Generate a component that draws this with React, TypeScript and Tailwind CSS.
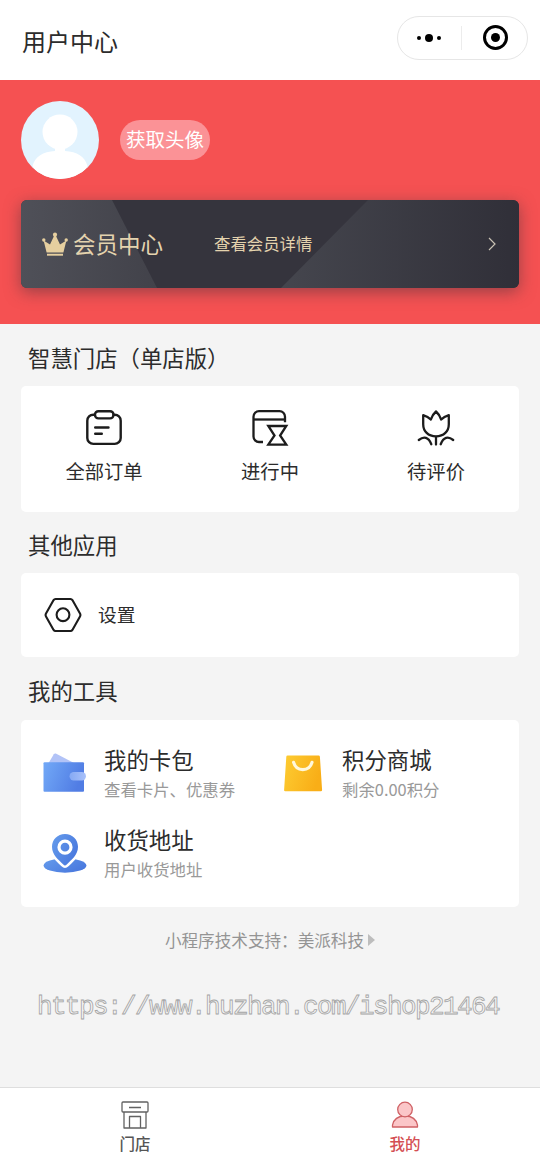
import React from 'react';

interface SectionProps {
  title: string;
  titleClass: string;
  children: React.ReactNode;
}

interface ToolItemProps {
  icon: React.ReactNode;
  title: string;
  desc: string;
}

const ClipboardIcon = () => (
  <svg className="w-10 h-10" viewBox="0 0 40 40" fill="none" stroke="#1c1c1c" strokeWidth="2.4" strokeLinecap="round" strokeLinejoin="round">
    <path d="M10.5 6.7H9.3a6 6 0 0 0-6 6v17.2a6 6 0 0 0 6 6h21.4a6 6 0 0 0 6-6V12.7a6 6 0 0 0-6-6h-1.2" />
    <rect x="11" y="3.2" width="18.5" height="7.2" rx="3.4" />
    <path d="M11.2 19.5h13.3M11.2 25.8h6.6" />
  </svg>
);

const ProgressIcon = () => (
  <svg className="w-10 h-10" viewBox="0 0 40 40" fill="none" stroke="#1c1c1c" strokeWidth="2.3" strokeLinejoin="miter">
    <path d="M35 14.2V8.7a5.5 5.5 0 0 0-5.5-5.5H9a5.5 5.5 0 0 0-5.5 5.500v19.800A5.500 5.500 0 0 0 9 34h4" />
    <path d="M3.500 11.500H35" />
    <path d="M18.300 18h18l-6.200 9.500 6.200 9.200h-18l6.200-9.200z" />
  </svg>
);

const TulipIcon = () => (
  <svg className="w-10 h-10" viewBox="0 0 40 40" fill="none" stroke="#1c1c1c" strokeWidth="2.300" strokeLinecap="round" strokeLinejoin="round">
    <path d="M20 3.500c-2.400 2-4 4.800-5.200 8.100-1.800-2-4.300-3.500-7.600-4.400v9c0 7 5 12.200 12.800 12.200s12.800-5.200 12.800-12.200v-9c-3.300.9-5.800 2.400-7.600 4.400C24 8.300 22.400 5.500 20 3.500z" />
    <path d="M20 29v7.500M2.800 32c5.200-4.200 9.700-2.800 12.500 4.200M37.200 32c-5.200-4.200-9.700-2.800-12.500 4.200" />
  </svg>
);

const SettingIcon = () => (
  <svg className="w-[38px] h-[36px]" viewBox="0 0 38 36" fill="none" stroke="#1c1c1c" strokeWidth="2.100" strokeLinejoin="round">
    <path d="M11.500 2h15q1.200 0 1.900 1.100l7.600 13.500q.8 1.400 0 2.800l-7.600 13.500q-.7 1.100-1.900 1.100h-15q-1.200 0-1.900-1.100L2 19.400q-.8-1.400 0-2.800L9.600 3.100Q10.300 2 11.500 2z" />
    <circle cx="19" cy="17.700" r="6.400" />
  </svg>
);

const WalletIcon = () => (
  <svg className="w-11 h-10" viewBox="0 0 44 40">
    <defs>
      <linearGradient id="wallet" x1="0" y1="0" x2="1" y2="0.3">
        <stop offset="0" stopColor="#72a9f7" />
        <stop offset="1" stopColor="#517de4" />
      </linearGradient>
      <linearGradient id="clasp" x1="0" y1="0" x2="1" y2="0">
        <stop offset="0" stopColor="#85a9f4" />
        <stop offset="1" stopColor="#a9c1fa" />
      </linearGradient>
    </defs>
    <path d="M5 11 10.800 1.300q.8-1.200 2-.7L31 10z" fill="#b2c3f7" />
    <rect x="0.500" y="9.300" width="40.500" height="29.500" rx="1" fill="url(#wallet)" />
    <rect x="26.500" y="19" width="16.500" height="8.500" rx="4.200" fill="url(#clasp)" />
  </svg>
);

const BagIcon = () => (
  <svg className="w-10 h-10" viewBox="0 0 40 40">
    <defs>
      <linearGradient id="bag" x1="0" y1="0" x2="1" y2="0.3">
        <stop offset="0" stopColor="#fdcc32" />
        <stop offset="1" stopColor="#f9ae17" />
      </linearGradient>
    </defs>
    <path d="M4.600 2.600h31q1.200 0 1.300 1.200L39.100 37q0 1.200-1.200 1.200H2.300q-1.300 0-1.200-1.200L3.300 3.800q.1-1.200 1.300-1.200z" fill="url(#bag)" />
    <path d="M10.600 9.400C13.300 19 26.300 19 29 9.400" fill="none" stroke="#fff8dc" strokeWidth="3.200" strokeLinecap="round" />
  </svg>
);

const AddressIcon = () => (
  <svg className="w-11 h-10" viewBox="0 0 44 40">
    <defs>
      <linearGradient id="pin" x1="0" y1="0" x2="1" y2="0.6">
        <stop offset="0" stopColor="#659cec" />
        <stop offset="1" stopColor="#4a79de" />
      </linearGradient>
    </defs>
    <ellipse cx="22" cy="32.500" rx="21.400" ry="7.200" fill="url(#pin)" />
    <path
      d="M22 1C14.500 1 9 6.700 9 13.700 9 22 15.500 26.500 20.300 31.600q1.700 1.700 3.400 0C28.500 26.500 35 22 35 13.700 35 6.700 29.500 1 22 1z"
      fill="url(#pin)"
      stroke="#fff"
      strokeWidth="5"
      paintOrder="stroke"
    />
    <circle cx="22" cy="14.200" r="6" fill="none" stroke="#fff" strokeWidth="3.200" />
  </svg>
);

const CrownIcon = () => (
  <svg className="w-[26px] h-6" viewBox="0 0 26 24" fill="#e6cf9f">
    <circle cx="13" cy="2.700" r="2.100" />
    <circle cx="1.800" cy="8" r="1.700" />
    <circle cx="24.200" cy="8" r="1.700" />
    <path d="M1.600 8.600 8 12.600 12 4h2l4 8.600 6.400-4-3 12H4.600z" />
    <path d="M5 21.700h16v2H5z" />
  </svg>
);

const StoreIcon = () => (
  <svg className="w-7 h-7" viewBox="0 0 28 28" fill="none" stroke="#626262" strokeWidth="1.300" strokeLinejoin="round">
    <rect x="1" y="1" width="26" height="10" rx="1" />
    <path d="M3 11v16h22V11M8.500 27V15.500h11V27M8 6.500h12" />
  </svg>
);

const UserIcon = () => (
  <svg className="w-7 h-7" viewBox="0 0 28 28" fill="#fbc6c8" stroke="#cf6165" strokeWidth="1.300" strokeLinejoin="round">
    <path d="M1.500 26v-1.800c1-5.200 5-9.200 12.500-9.200s11.500 4 12.500 9.200V26z" />
    <circle cx="14" cy="8.500" r="7.300" />
  </svg>
);

const Capsule = () => (
  <div className="flex items-center w-[131px] h-[44px] mt-[-5px] rounded-full border border-[#e6e6e6]">
    <div className="flex-1 flex items-center justify-center gap-1">
      <span className="w-1 h-1 rounded-full bg-black" />
      <span className="w-2 h-2 rounded-full bg-black" />
      <span className="w-1 h-1 rounded-full bg-black" />
    </div>
    <div className="w-px h-6 bg-[#ececec]" />
    <div className="flex-1 flex items-center justify-center pl-[3px]">
      <span className="flex items-center justify-center w-[25px] h-[25px] rounded-full border-3 border-black">
        <span className="w-[9px] h-[9px] rounded-full bg-black" />
      </span>
    </div>
  </div>
);

const Section: React.FC<SectionProps> = ({ title, titleClass, children }) => (
  <section className="px-[21px]">
    <h2 className={`flex items-center pl-[7px] pt-1 text-[22.400px] leading-none ${titleClass}`}>{title}</h2>
    <div className="bg-white rounded-[5px]">{children}</div>
  </section>
);

const ToolItem: React.FC<ToolItemProps> = ({ icon, title, desc }) => (
  <div className="flex h-20">
    <div className="flex w-[44px] justify-center pt-[13px]">{icon}</div>
    <div className="pl-[17px] whitespace-nowrap">
      <div className="text-[22.400px] leading-[39px]">{title}</div>
      <div className="text-[16.400px] leading-[21px] text-[#999]">{desc}</div>
    </div>
  </div>
);

const orders = [
  { label: '全部订单', icon: <ClipboardIcon /> },
  { label: '进行中', icon: <ProgressIcon /> },
  { label: '待评价', icon: <TulipIcon /> },
];

const App: React.FC = () => {
  return (
    <div className="flex flex-col w-[540px] h-[1163px] overflow-hidden bg-[#f4f4f4] text-[#2c2c2c] font-['Noto_Sans_CJK_SC',sans-serif]">
      <header className="flex items-center justify-between h-20 pl-[22px] pr-3 bg-white">
        <h1 className="text-[24px] leading-none pt-0.5">用户中心</h1>
        <Capsule />
      </header>

      <div className="h-[244px] px-[21px] pt-[21px] bg-[#f55152]">
        <div className="flex items-center">
          <svg className="w-[78px] h-[78px] rounded-full" viewBox="0 0 78 78">
            <rect width="78" height="78" fill="#e2f3fe" />
            <circle cx="39" cy="31" r="17.500" fill="#fff" />
            <path d="M34 44h10v6c12 .5 20 5.500 22.500 15L58 78H20l-8.500-13C14 55.500 22 50.500 34 50z" fill="#fff" />
          </svg>
          <button className="ml-[21px] w-[90px] h-10 pb-0.5 rounded-full bg-[#fb9296] text-white text-[19.500px] leading-none whitespace-nowrap">
            获取头像
          </button>
        </div>

        {/* Member card */}
        <div className="relative mt-[21px] h-[88px] rounded-[6px] overflow-hidden shadow-[0_4px_16px_rgba(60,50,60,0.5)]">
          <svg className="absolute inset-0 w-full h-full" viewBox="0 0 498 88" preserveAspectRatio="none">
            <defs>
              <linearGradient id="cardLeft" x1="0" y1="0" x2="1" y2="0">
                <stop offset="0" stopColor="#4f5058" />
                <stop offset="1" stopColor="#42424a" />
              </linearGradient>
              <linearGradient id="cardRight" x1="0" y1="0" x2="1" y2="0">
                <stop offset="0" stopColor="#45464e" />
                <stop offset="1" stopColor="#302f38" />
              </linearGradient>
            </defs>
            <rect width="498" height="88" fill="#35343d" />
            <path d="M0 0h91l45 88H0z" fill="url(#cardLeft)" />
            <path d="M347 0h151v88H260z" fill="url(#cardRight)" />
          </svg>
          <div className="relative flex items-center h-full pl-[21px] pr-[23px] text-[#e4d3ae] leading-none">
            <CrownIcon />
            <span className="ml-[5px] w-[141px] pb-0.5 text-[22.500px]">会员中心</span>
            <span className="pb-0.5 text-[16.400px]">查看会员详情</span>
            <svg className="ml-auto w-2 h-3.5" viewBox="0 0 8 14" fill="none" stroke="#c9c2b4" strokeWidth="1.200">
              <path d="M1 1l6 6-6 6" />
            </svg>
          </div>
        </div>
      </div>

      <Section title="智慧门店（单店版）" titleClass="h-[62px]">
        <div className="flex h-[126px] pt-[22px]">
          {orders.map((item) => (
            <div key={item.label} className="flex-1 flex flex-col items-center">
              {item.icon}
              <span className="mt-[13px] text-[19.300px] leading-5">{item.label}</span>
            </div>
          ))}
        </div>
      </Section>

      <Section title="其他应用" titleClass="h-[61px]">
        <div className="flex items-center h-[84px] pl-[23px]">
          <SettingIcon />
          <span className="ml-4 pb-0.5 text-[18.700px] leading-none">设置</span>
        </div>
      </Section>

      <Section title="我的工具" titleClass="h-[63px]">
        <div className="grid grid-cols-[238px_1fr] content-start h-[187px] pl-[22px] pt-5">
          <ToolItem icon={<WalletIcon />} title="我的卡包" desc="查看卡片、优惠券" />
          <ToolItem icon={<BagIcon />} title="积分商城" desc="剩余0.00积分" />
          <ToolItem icon={<AddressIcon />} title="收货地址" desc="用户收货地址" />
        </div>
      </Section>

      <div className="flex items-center justify-center mt-[23px] h-5 text-[16.600px] leading-none text-[#949494]">
        小程序技术支持：美派科技
        <svg className="ml-1 w-[7px] h-3" viewBox="0 0 7 12" fill="#bdbdbd">
          <path d="M0 0l7 6-7 6z" />
        </svg>
      </div>

      <div className="mt-10 pl-[37px] whitespace-nowrap font-['Liberation_Mono',monospace] text-[26px] leading-[34px] tracking-[-1.600px] text-transparent [-webkit-text-stroke:0.800px_#a4a4a4]">
        https://www.huzhan.com/ishop21464
      </div>

      <nav className="flex mt-auto h-[76px] bg-white border-t border-[#dedede] text-[15.500px] leading-none font-medium">
        <div className="flex-1 flex flex-col items-center pt-[13px] text-[#555]">
          <StoreIcon />
          <span className="mt-[7px]">门店</span>
        </div>
        <div className="flex-1 flex flex-col items-center pt-[13px] text-[#d44f54]">
          <UserIcon />
          <span className="mt-[7px]">我的</span>
        </div>
      </nav>
    </div>
  );
};

export default App;
